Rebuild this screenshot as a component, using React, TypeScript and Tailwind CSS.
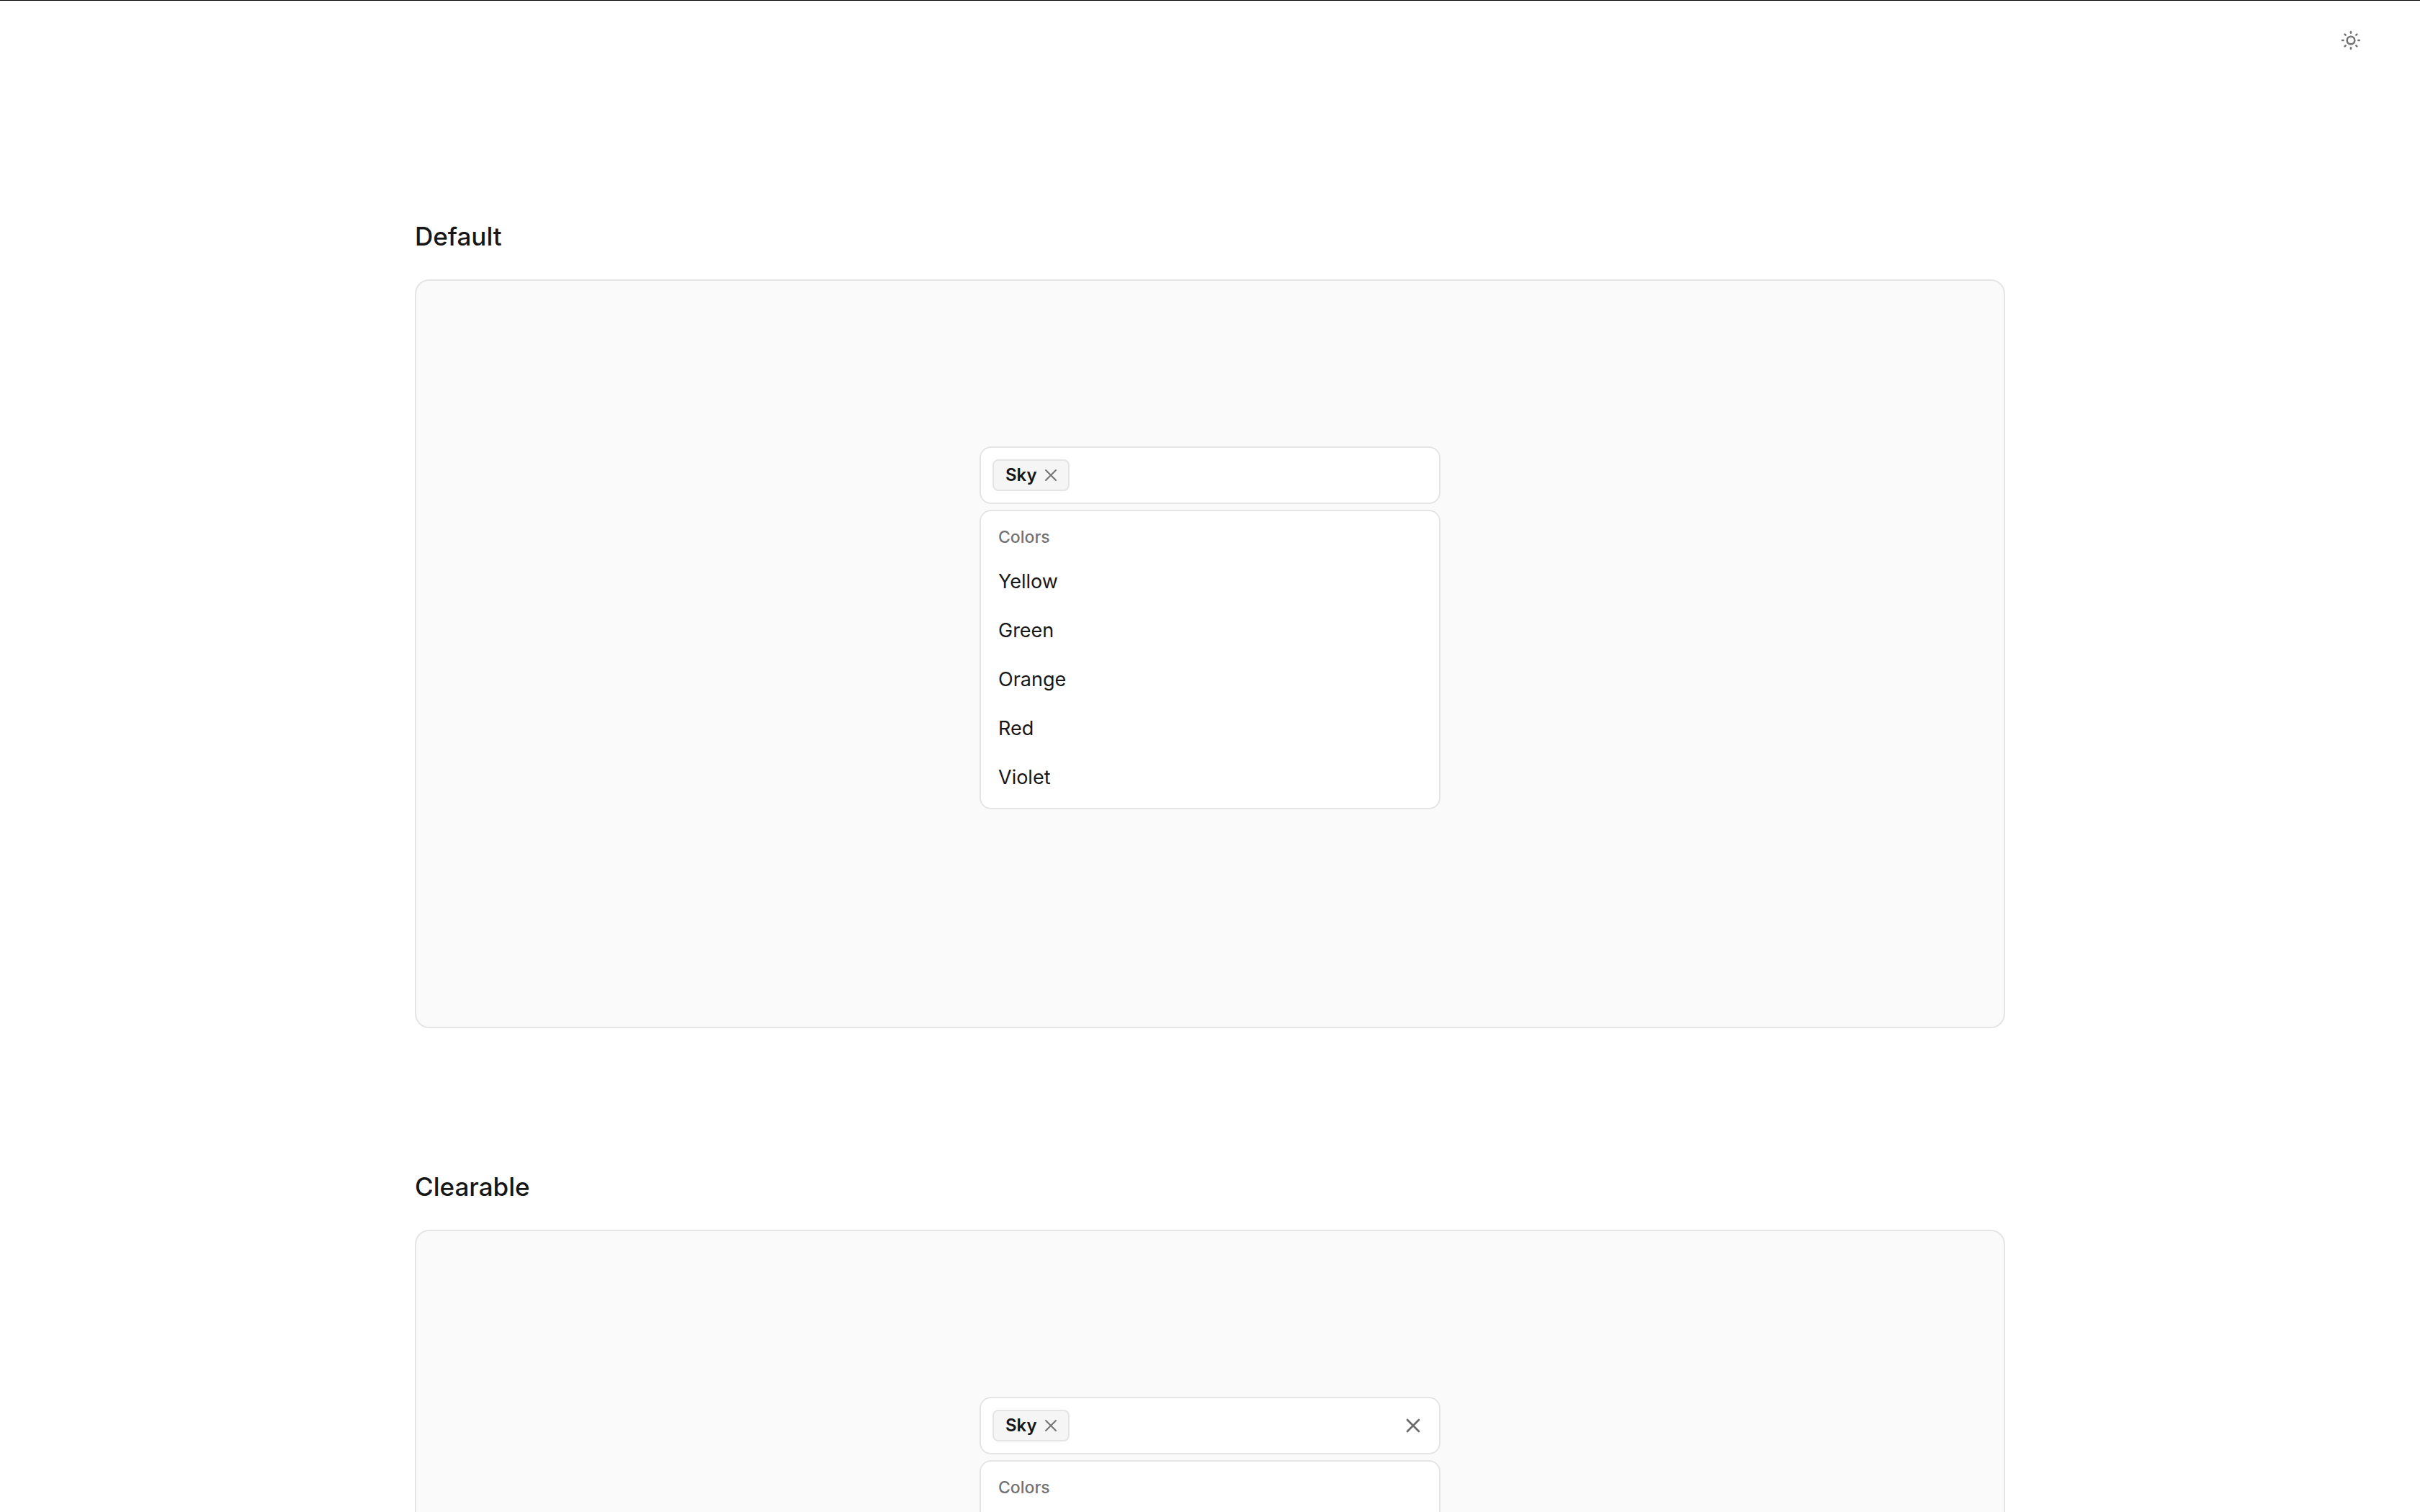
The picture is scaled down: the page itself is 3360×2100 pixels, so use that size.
import { useState } from "react";

const COLORS = ["Sky", "Yellow", "Green", "Orange", "Red", "Violet"];

function SunIcon() {
  const angles = [0, 45, 90, 135, 180, 225, 270, 315];
  return (
    <svg
      viewBox="0 0 32 32"
      className="size-8"
      fill="none"
      stroke="currentColor"
      strokeWidth="2.6"
      strokeLinecap="round"
      aria-hidden="true"
    >
      <circle cx="16" cy="16" r="5.3" />
      {angles.map((a) => (
        <path key={a} d="M16 4.2v1.4" transform={`rotate(${a} 16 16)`} />
      ))}
    </svg>
  );
}

function CrossIcon({ className, stroke }: { className: string; stroke: number }) {
  return (
    <svg
      viewBox="0 0 24 24"
      className={className}
      fill="none"
      stroke="currentColor"
      strokeWidth={stroke}
      strokeLinecap="round"
      aria-hidden="true"
    >
      <path d="M18 6 6 18M6 6l12 12" />
    </svg>
  );
}

function MultiSelect({ label, clearable = false }: { label: string; clearable?: boolean }) {
  const [selected, setSelected] = useState<string[]>(["Sky"]);
  const options = COLORS.filter((c) => !selected.includes(c));

  return (
    <div className="flex w-full max-w-[640px] flex-col gap-2">
      <div className="flex min-h-20 items-center rounded-2xl border-2 border-[#e5e5e5] bg-white pl-4">
        <div className="flex grow flex-wrap items-center gap-2 py-4">
          {selected.map((name) => (
            <span
              key={name}
              className="flex h-11 items-center gap-[5px] rounded-lg border-2 border-[#e5e5e5] bg-[#f5f5f5] pr-2.5 pl-4 text-[24px] leading-8 font-semibold"
            >
              {name}
              <button
                type="button"
                aria-label={`Remove ${name}`}
                className="text-[#737373]"
                onClick={() => setSelected(selected.filter((s) => s !== name))}
              >
                <CrossIcon className="size-7" stroke={1.7} />
              </button>
            </span>
          ))}
          <input
            type="text"
            aria-label={label}
            className="h-10 min-w-0 flex-1 bg-transparent px-2 text-[27px] outline-none"
          />
        </div>
        {clearable && (
          <button
            type="button"
            aria-label="Clear all"
            className="flex size-18 items-center justify-center text-[#6b6b6b]"
            onClick={() => setSelected([])}
          >
            <CrossIcon className="size-8" stroke={2} />
          </button>
        )}
      </div>

      <div className="rounded-2xl border-2 border-[#e5e5e5] bg-white p-2">
        <p className="px-4 py-3 text-[23px] leading-8 font-medium text-[#737373]">Colors</p>
        <ul role="listbox" aria-label={`${label} options`}>
          {options.map((name) => (
            <li key={name} role="option" aria-selected="false">
              <button
                type="button"
                className="block w-full px-4 py-3.5 text-left text-[27px] leading-10"
                onClick={() => setSelected([...selected, name])}
              >
                {name}
              </button>
            </li>
          ))}
        </ul>
      </div>
    </div>
  );
}

function Example({ title, clearable }: { title: string; clearable?: boolean }) {
  return (
    <section className="flex flex-col gap-8">
      <h2 className="text-[35px] leading-14 font-medium">{title}</h2>
      <div className="flex min-h-[1040px] items-start justify-center rounded-[20px] border-2 border-[#e5e5e5] bg-[#fafafa] px-8 pt-[230px] pb-16">
        <MultiSelect label={title} clearable={clearable} />
      </div>
    </section>
  );
}

export default function App() {
  return (
    <div className="h-screen overflow-y-auto border-t border-black bg-white font-['Inter','Liberation_Sans',sans-serif] text-[#171717] [scrollbar-width:none]">
      <header className="flex justify-end px-15 pt-[19px] pb-5">
        <button
          type="button"
          aria-label="Toggle theme"
          className="flex size-18 items-center justify-center text-[#737373]"
        >
          <SunIcon />
        </button>
      </header>
      <main className="mx-auto flex max-w-[2304px] flex-col gap-48 px-12 pt-[188px] pb-48">
        <Example title="Default" />
        <Example title="Clearable" clearable />
      </main>
    </div>
  );
}
